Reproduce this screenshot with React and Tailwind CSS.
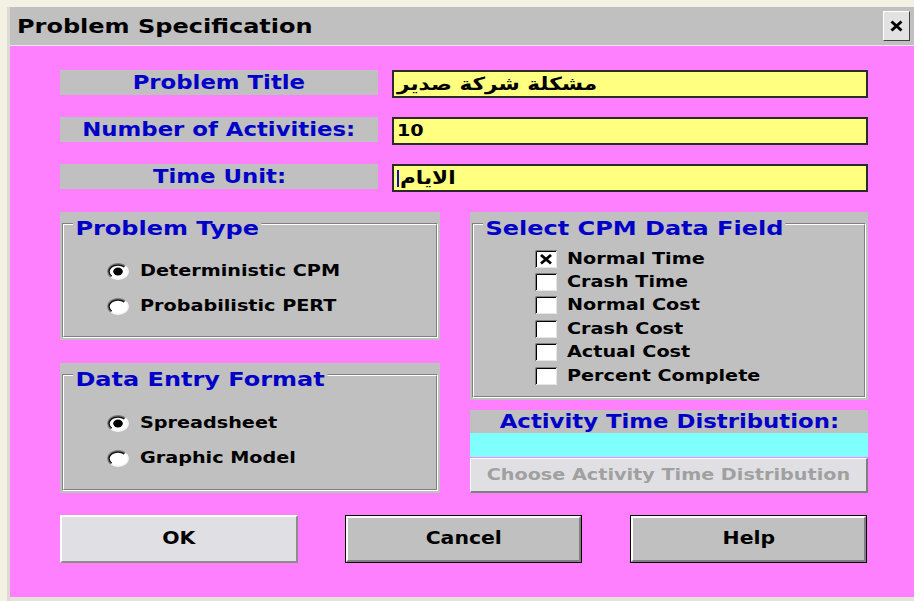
import React from 'react';

// The dialog font is drawn a bit wide; these spans widen the glyphs.
const Wide = ({ children, center }) => (
    <span className={center ? 'inline-block origin-center scale-x-[1.2] whitespace-nowrap' : 'inline-block origin-left scale-x-[1.2] whitespace-nowrap'}>
        {children}
    </span>
);

// Sunken oval radio, 3D style
const Radio = ({ checked }) => (
    <svg width="22" height="17" viewBox="0 0 22 17" className="shrink-0">
        <ellipse cx="11" cy="8.5" rx="10.2" ry="7.8" fill="#fff" stroke="#f4f4f4" strokeWidth="1.4" />
        <path d="M3.79 14.02A10.2 7.8 0 0 1 18.21 2.98" fill="none" stroke="#808080" strokeWidth="1.6" />
        <path d="M4.64 13.2A9 6.6 0 0 1 17.36 3.8" fill="none" stroke="#101010" strokeWidth="1.5" />
        {checked && <ellipse cx="11" cy="8.5" rx="4.8" ry="4" fill="#000" />}
    </svg>
);

// Sunken check box with a bold cross
const CheckBox = ({ checked }) => (
    <svg width="22" height="18" viewBox="0 0 22 18" className="shrink-0">
        <rect x="0" y="0" width="22" height="18" fill="#fff" />
        <path d="M0.5 17.5H21.5V0.5" stroke="#e6e6e6" fill="none" />
        <path d="M0.5 18V0.5H22" stroke="#808080" fill="none" />
        <path d="M1.5 17V1.5H21" stroke="#000" fill="none" />
        {checked && <path d="M6 5L16 13.5M16 5L6 13.5" stroke="#000" strokeWidth="2.8" />}
    </svg>
);

const GroupBox = ({ title, className, children }) => (
    <div className={`relative bg-[#c0c0c0] px-[2px] pb-[2px] pt-[11px] ${className}`}>
        <div className="h-full border border-t-[#808080] border-l-[#808080] border-r-white border-b-white">
            <div className="h-full border border-t-white border-l-white border-r-[#808080] border-b-[#808080]">
                {children}
            </div>
        </div>
        {/* caption sits over the frame line */}
        <span className="absolute left-[13px] top-[6px] inline-block origin-left scale-x-[1.2] whitespace-nowrap bg-[#c0c0c0] px-[2px] text-[20px] leading-[20px] font-bold text-[#0000c8]">
            {title}
        </span>
    </div>
);

const FieldRow = ({ label, value, caret, arabic }) => (
    <div className="flex h-[28px] items-start">
        <div className="flex h-[25px] w-[318px] items-center justify-center bg-[#c0c0c0] text-[19px] leading-[19px] font-bold text-[#0000c8]">
            <Wide center>{label}</Wide>
        </div>
        <div className="ml-[14px] flex h-[28px] w-[476px] items-center border-2 border-[#2a2a2a] bg-[#ffff80] pl-[3px] text-black font-bold">
            {caret && <span className="mr-[1px] h-[17px] w-[2px] shrink-0 bg-[#1010c0]" />}
            {arabic
                ? <span className="text-[18px] leading-[20px]"><Wide>{value}</Wide></span>
                : <span className="text-[16px] leading-[20px]"><Wide>{value}</Wide></span>}
        </div>
    </div>
);

const cpmFields = [
    { label: 'Normal Time', checked: true },
    { label: 'Crash Time' },
    { label: 'Normal Cost' },
    { label: 'Crash Cost' },
    { label: 'Actual Cost' },
    { label: 'Percent Complete' },
];

export default function App() {
    return (
        <div className="h-[601px] w-[914px] overflow-hidden bg-[#f3f1e4] pl-[7px] pt-[7px] font-['DejaVu_Sans',sans-serif]">
            <div className="flex h-full flex-col border-l-[3px] border-[#dcdad2]">
                {/* Title bar */}
                <div className="flex h-[39px] shrink-0 items-center justify-between border-b border-[#e8e8e8] bg-[#c0c0c0] pl-[7px] pr-[4px]">
                    <span className="text-[20px] font-bold text-black"><Wide>Problem Specification</Wide></span>
                    <button className="flex h-[30px] w-[27px] items-center justify-center border border-t-white border-l-white border-r-[#404040] border-b-[#404040] bg-[#e2e2e2]">
                        <svg width="13" height="12" viewBox="0 0 13 12">
                            <path d="M1.5 1.5L11.5 10.5M11.5 1.5L1.5 10.5" stroke="#000" strokeWidth="3" />
                        </svg>
                    </button>
                </div>

                {/* Body */}
                <div className="flex-1 border-b-4 border-[#e4e2da] bg-[#ff80ff] pl-[50px] pt-[24px]">
                    <div className="flex flex-col gap-[19px]">
                        <FieldRow label="Problem Title" value="مشكلة شركة صدير" arabic />
                        <FieldRow label="Number of Activities:" value="10" />
                        <FieldRow label="Time Unit:" value="الايام" arabic caret />
                    </div>

                    <div className="mt-[20px] flex gap-[30px]">
                        {/* Left column */}
                        <div className="flex w-[380px] flex-col">
                            <GroupBox title="Problem Type" className="h-[128px]">
                                <div className="flex flex-col gap-[13px] pl-[43px] pt-[35px] text-[16px] font-bold text-black">
                                    <label className="flex h-[22px] items-center gap-[11px]"><Radio checked /><Wide>Deterministic CPM</Wide></label>
                                    <label className="flex h-[22px] items-center gap-[11px]"><Radio /><Wide>Probabilistic PERT</Wide></label>
                                </div>
                            </GroupBox>
                            <GroupBox title="Data Entry Format" className="mt-[23px] h-[130px]">
                                <div className="flex flex-col gap-[13px] pl-[43px] pt-[36px] text-[16px] font-bold text-black">
                                    <label className="flex h-[22px] items-center gap-[11px]"><Radio checked /><Wide>Spreadsheet</Wide></label>
                                    <label className="flex h-[22px] items-center gap-[11px]"><Radio /><Wide>Graphic Model</Wide></label>
                                </div>
                            </GroupBox>
                        </div>

                        {/* Right column */}
                        <div className="flex w-[398px] flex-col">
                            <GroupBox title="Select CPM Data Field" className="h-[188px]">
                                <div className="flex flex-col pl-[61px] pt-[22px] text-[16px] font-bold text-black">
                                    {cpmFields.map((f) => (
                                        <label key={f.label} className="flex h-[23.4px] items-center gap-[10px]">
                                            <CheckBox checked={f.checked} />
                                            <Wide>{f.label}</Wide>
                                        </label>
                                    ))}
                                </div>
                            </GroupBox>
                            <div className="mt-[10px] flex h-[23px] items-center justify-center bg-[#c0c0c0] text-[19px] leading-[19px] font-bold text-[#0000c8]">
                                <Wide center>Activity Time Distribution:</Wide>
                            </div>
                            <div className="h-[24px] bg-[#80ffff]" />
                            <button
                                disabled
                                className="mt-[1px] flex h-[35px] items-center justify-center border border-t-white border-l-white border-r-2 border-b-2 border-r-[#808080] border-b-[#808080] bg-[#e0e0e4] text-[16px] font-bold text-[#a0a0a0]"
                            >
                                <Wide center>Choose Activity Time Distribution</Wide>
                            </button>
                        </div>
                    </div>

                    {/* Dialog buttons */}
                    <div className="mt-[22px] flex h-[48px] text-[17px] font-bold text-black">
                        <button className="flex h-[48px] w-[238px] items-center justify-center border-2 border-t-white border-l-white border-r-[#8c8c8c] border-b-[#8c8c8c] bg-[#e0e0e4]">
                            <Wide center>OK</Wide>
                        </button>
                        <div className="ml-[47px] h-[48px] w-[237px] border border-black">
                            <button className="flex h-full w-full items-center justify-center border-2 border-t-white border-l-white border-r-[#808080] border-b-[#808080] bg-[#c0c0c0]">
                                <Wide center>Cancel</Wide>
                            </button>
                        </div>
                        <div className="ml-[48px] h-[48px] w-[237px] border border-black">
                            <button className="flex h-full w-full items-center justify-center border-2 border-t-white border-l-white border-r-[#808080] border-b-[#808080] bg-[#c0c0c0]">
                                <Wide center>Help</Wide>
                            </button>
                        </div>
                    </div>
                </div>
            </div>
        </div>
    );
}
